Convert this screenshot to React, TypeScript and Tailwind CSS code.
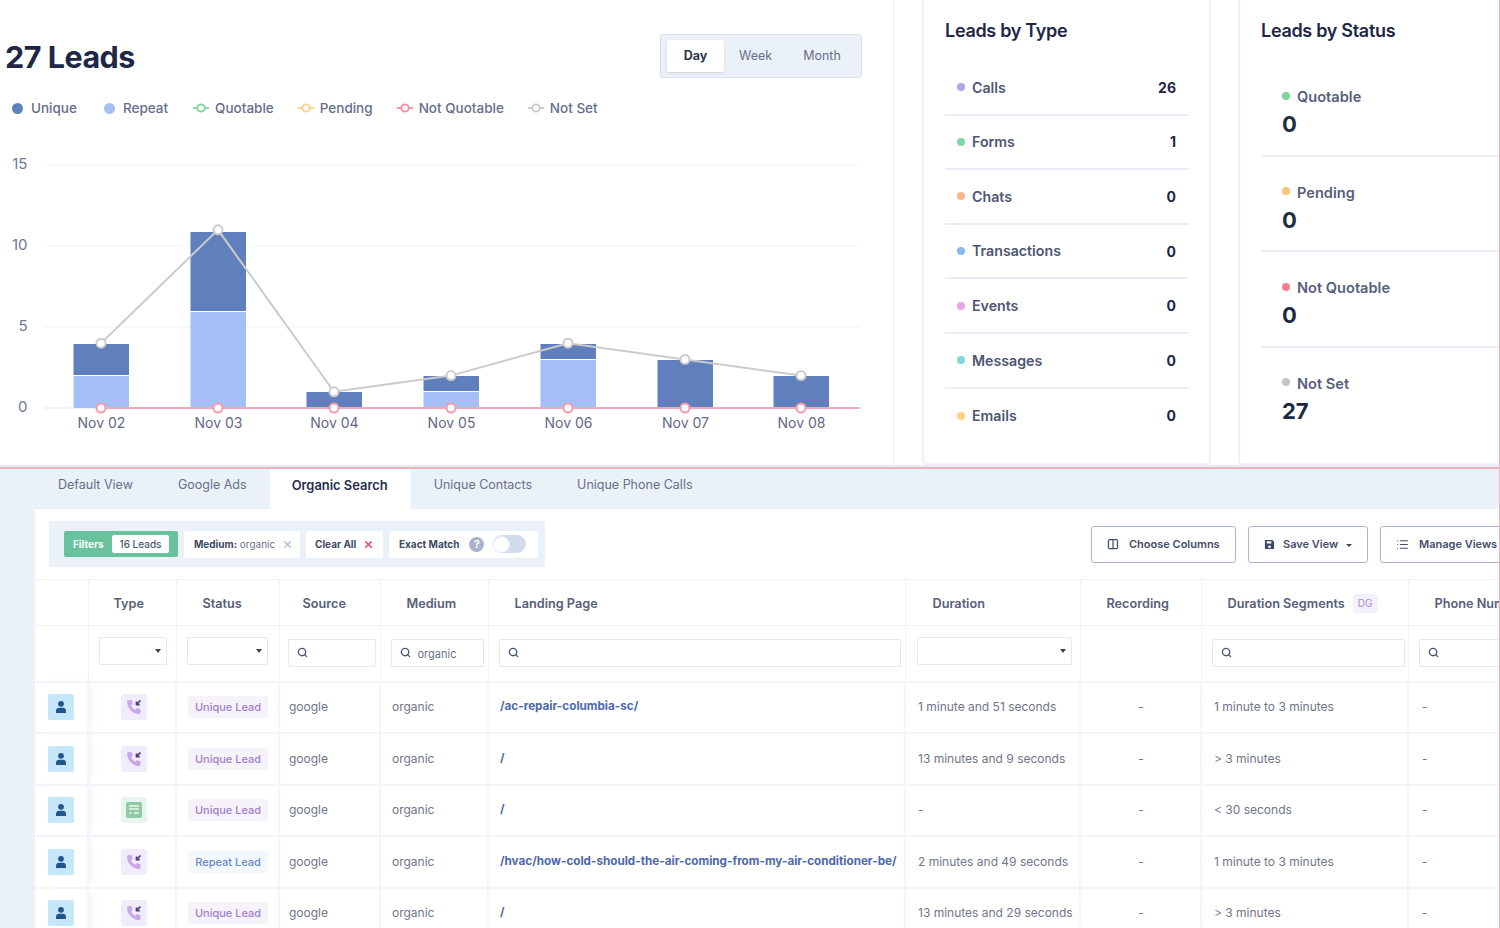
import { Columns2, List, Search, X } from 'lucide-react'

const font = 'font-["Inter","Liberation_Sans",sans-serif]'

const bars = [
  { label: 'Nov 02', x: 101, light: 2, dark: 2, total: 4 },
  { label: 'Nov 03', x: 218, light: 6, dark: 5, total: 11 },
  { label: 'Nov 04', x: 334, light: 0, dark: 1, total: 1 },
  { label: 'Nov 05', x: 451, light: 1, dark: 1, total: 2 },
  { label: 'Nov 06', x: 568, light: 3, dark: 1, total: 4 },
  { label: 'Nov 07', x: 685, light: 0, dark: 3, total: 3 },
  { label: 'Nov 08', x: 801, light: 0, dark: 2, total: 2 },
]

const legend = [
  { name: 'Unique', dot: 'bg-[#5f80bd]', gap: 'mr-[3px]' },
  { name: 'Repeat', dot: 'bg-[#a3bff5]', gap: 'mr-[1px]' },
  { name: 'Quotable', line: '#7dd49a' },
  { name: 'Pending', line: '#fbcf87' },
  { name: 'Not Quotable', line: '#f98d9b' },
  { name: 'Not Set', line: '#c9c9c9' },
]

const leadTypes = [
  { name: 'Calls', value: '26', dot: 'bg-[#b3a3ea]' },
  { name: 'Forms', value: '1', dot: 'bg-[#7fd8a8]' },
  { name: 'Chats', value: '0', dot: 'bg-[#fdb487]' },
  { name: 'Transactions', value: '0', dot: 'bg-[#86b8f5]' },
  { name: 'Events', value: '0', dot: 'bg-[#e9a3e8]' },
  { name: 'Messages', value: '0', dot: 'bg-[#7dd8d8]' },
  { name: 'Emails', value: '0', dot: 'bg-[#fcd27a]' },
]

const leadStatuses = [
  { name: 'Quotable', value: '0', dot: 'bg-[#7fd49a]' },
  { name: 'Pending', value: '0', dot: 'bg-[#fdc477]' },
  { name: 'Not Quotable', value: '0', dot: 'bg-[#f97f8f]' },
  { name: 'Not Set', value: '27', dot: 'bg-[#c4c4c4]' },
]

const rows = [
  { kind: 'call', status: 'Unique Lead', page: '/ac-repair-columbia-sc/', duration: '1 minute and 51 seconds', segment: '1 minute to 3 minutes' },
  { kind: 'call', status: 'Unique Lead', page: '/', duration: '13 minutes and 9 seconds', segment: '> 3 minutes' },
  { kind: 'form', status: 'Unique Lead', page: '/', duration: '-', segment: '< 30 seconds' },
  { kind: 'call', status: 'Repeat Lead', page: '/hvac/how-cold-should-the-air-coming-from-my-air-conditioner-be/', duration: '2 minutes and 49 seconds', segment: '1 minute to 3 minutes' },
  { kind: 'call', status: 'Unique Lead', page: '/', duration: '13 minutes and 29 seconds', segment: '> 3 minutes' },
]

const gridY = (v: number) => 408 - v * 16.2
const barY = (v: number) => 408 - v * 16

function Chart() {
  const points = bars.map((b) => `${b.x},${gridY(b.total)}`).join(' ')
  return (
    <svg width="893" height="300" viewBox="0 140 893 300" className="mt-[22px] block">
      {[0, 5, 10, 15].map((v) => (
        <g key={v}>
          <line x1="44" x2="860" y1={gridY(v)} y2={gridY(v)} stroke={v === 0 ? '#dbe5f1' : '#eff3f8'} strokeWidth="1.2" />
          <text x="27.5" y={gridY(v) + 4} textAnchor="end" fontSize="15" fill="#6f7a94" fontFamily="Inter">{v}</text>
        </g>
      ))}
      {bars.map((b) => (
        <g key={b.label}>
          <rect x={b.x - 27.5} y={barY(b.light + b.dark)} width="55.5" height={b.dark * 16 - 1} fill="#5f80bd" />
          {b.light > 0 && <rect x={b.x - 27.5} y={barY(b.light)} width="55.5" height={b.light * 16} fill="#a3bff5" />}
          <text x={b.x + 0.5} y="428" textAnchor="middle" fontSize="14" fill="#5f6984" fontFamily="Inter">{b.label}</text>
        </g>
      ))}
      <line x1="101" x2="860" y1="408" y2="408" stroke="#f3a9b3" strokeWidth="2" />
      <polyline points={points} fill="none" stroke="#cbcbcb" strokeWidth="2" />
      {bars.map((b) => (
        <g key={b.label}>
          <circle cx={b.x} cy={gridY(b.total)} r="4.5" fill="#fff" stroke="#cbcbcb" strokeWidth="2" />
          <circle cx={b.x} cy="408" r="4.5" fill="#fff" stroke="#f79aa7" strokeWidth="2" />
        </g>
      ))}
    </svg>
  )
}

function LineMarker({ color }: { color: string }) {
  return (
    <svg width="16" height="10" viewBox="0 0 16 10" className="shrink-0">
      <line x1="0" x2="16" y1="5" y2="5" stroke={color} strokeWidth="1.8" />
      <circle cx="8" cy="5" r="3.7" fill="#fff" stroke={color} strokeWidth="1.8" />
    </svg>
  )
}

function PersonIcon() {
  return (
    <span className="flex h-[26px] w-[26px] items-center justify-center rounded-[2px] bg-[#c6e6fa]">
      <svg width="14" height="14" viewBox="0 0 14 14" fill="#21558c">
        <circle cx="7" cy="3.800" r="2.900" />
        <path d="M2 13v-2.200C2 9 3.500 7.800 5 7.800h4c1.500 0 3 1.200 3 3V13z" />
      </svg>
    </span>
  )
}

function CallIcon() {
  return (
    <span className="flex h-[26px] w-[26px] items-center justify-center rounded-[3px] bg-[#f1ecfc]">
      <svg width="18" height="18" viewBox="0 0 18 18">
        <path d="M3.5 2.2 6 2c.5 0 .8.3.9.7l.6 2.6c.1.4 0 .7-.3 1L6 7.300c.8 1.900 2.300 3.500 4.300 4.500l1.100-1.200c.3-.3.7-.4 1-.3l2.500.7c.4.100.7.500.7.900L15.400 14.600c0 1-.8 1.600-1.700 1.500C7.500 15.600 2.500 10.500 2 4c-.1-1 .5-1.700 1.500-1.800z" fill="#c9a7ea" />
        <path d="M15.500 2.500 11.800 6.200M11.500 3.500v3.200h3.200" fill="none" stroke="#4d3f80" strokeWidth="1.700" />
      </svg>
    </span>
  )
}

function FormIcon() {
  return (
    <span className="flex h-[26px] w-[26px] items-center justify-center rounded-[3px] bg-[#e7f7ee]">
      <svg width="18" height="18" viewBox="0 0 18 18">
        <rect x="1" y="1" width="16" height="16" rx="2" fill="#8fcaa2" />
        <path d="M4 5h10M4 8h10" stroke="#e7f7ee" strokeWidth="1.400" />
        <path d="M4 12h2.500M9 12h5" stroke="#e7f7ee" strokeWidth="1.600" />
      </svg>
    </span>
  )
}

function SearchInput({ className, value }: { className: string; value?: string }) {
  return (
    <div className={`-mt-[1px] flex h-[28px] items-center gap-[7px] rounded-[2px] border border-[#e3e9f3] bg-white pl-[8px] ${className}`}>
      <Search size={11} strokeWidth={3} className="shrink-0 text-[#4b5675]" />
      {value && <span className="pt-[2px] text-[11px] text-[#6b7389]">{value}</span>}
    </div>
  )
}

function SelectBox({ className }: { className: string }) {
  return (
    <div className={`-mt-[4px] flex h-[28px] items-center justify-end rounded-[2px] border border-[#e3e9f3] bg-white pr-[5px] ${className}`}>
      <span className="h-0 w-0 border-x-[3.5px] border-t-[4px] border-x-transparent border-t-[#3a4258]" />
    </div>
  )
}

const headerCell = 'border-r border-[#eff2f8] pt-[2px] text-left text-[12.700px] font-semibold text-[#56607a]'
const filterCell = 'border-r border-[#eff2f8] p-0'
const bodyCell = 'border-r-2 border-b-2 border-[#f3f5fa] p-0 whitespace-nowrap'
const plainText = 'text-[12px] text-[#6f7689]'

function LeadsTable() {
  return (
    <table className="w-[1545px] table-fixed border-collapse">
      <colgroup>
        <col className="w-[53px]" />
        <col className="w-[88px]" />
        <col className="w-[103px]" />
        <col className="w-[101px]" />
        <col className="w-[108px]" />
        <col className="w-[417px]" />
        <col className="w-[175px]" />
        <col className="w-[121px]" />
        <col className="w-[207px]" />
        <col className="w-[172px]" />
      </colgroup>
      <thead>
        <tr className="h-[46px] border-y border-[#eff2f8]">
          <th className="border-r border-[#eff2f8]" />
          <th className={`${headerCell} pl-[25px]`}>Type</th>
          <th className={`${headerCell} pl-[26px]`}>Status</th>
          <th className={`${headerCell} pl-[23px]`}>Source</th>
          <th className={`${headerCell} pl-[26px]`}>Medium</th>
          <th className={`${headerCell} pl-[26px]`}>Landing Page</th>
          <th className={`${headerCell} pl-[27px]`}>Duration</th>
          <th className={`${headerCell} pl-[26px]`}>Recording</th>
          <th className={`${headerCell} pl-[26px]`}>
            <span className="flex items-center gap-[8px]">
              Duration Segments
              <span className="rounded-[3px] bg-[#f4f0fc] px-[5px] py-[2px] text-[10px] font-normal text-[#a48bd8]">DG</span>
            </span>
          </th>
          <th className={`${headerCell} pl-[26px] whitespace-nowrap`}>Phone Number</th>
        </tr>
        <tr className="h-[56px] border-b-2 border-[#f3f5fa]">
          <th className={filterCell} />
          <th className={filterCell}><SelectBox className="ml-[10px] w-[68px]" /></th>
          <th className={filterCell}><SelectBox className="ml-[10px] w-[81px]" /></th>
          <th className={filterCell}><SearchInput className="ml-[8px] w-[88px]" /></th>
          <th className={`${filterCell} font-normal`}><SearchInput className="ml-[10px] w-[93px]" value="organic" /></th>
          <th className={filterCell}><SearchInput className="ml-[10px] w-[402px]" /></th>
          <th className={filterCell}><SelectBox className="ml-[11px] w-[155px]" /></th>
          <th className={filterCell} />
          <th className={filterCell}><SearchInput className="ml-[10px] w-[193px]" /></th>
          <th className={filterCell}><SearchInput className="ml-[10px] w-[120px]" /></th>
        </tr>
      </thead>
      <tbody>
        {rows.map((row, i) => (
          <tr key={i} className="h-[51.500px]">
            <td className="border-r-2 border-b-2 border-[#f3f5fa] pl-[13px] shadow-[5px_0_8px_-3px_rgba(120,135,170,0.12)]">
              <PersonIcon />
            </td>
            <td className="border-r-2 border-b-2 border-[#f3f5fa] pl-[32px]">
              {row.kind === 'call' ? <CallIcon /> : <FormIcon />}
            </td>
            <td className="border-r-2 border-b-2 border-[#f3f5fa] pl-[11px]">
              {row.status === 'Unique Lead' ? (
                <span className="flex h-[22px] w-[80px] items-center justify-center rounded-[2px] bg-[#f6f3fb] text-[11px] font-medium whitespace-nowrap text-[#a17fcc]">{row.status}</span>
              ) : (
                <span className="flex h-[22px] w-[80px] items-center justify-center rounded-[2px] bg-[#f3f8fe] text-[11px] font-medium whitespace-nowrap text-[#6a88c4]">{row.status}</span>
              )}
            </td>
            <td className={`${bodyCell} ${plainText} pl-[9px]`}>google</td>
            <td className={`${bodyCell} ${plainText} pl-[11px]`}>organic</td>
            <td className={`${bodyCell} pl-[11px] text-[11.700px] font-bold text-[#4d68ad]`}>{row.page}</td>
            <td className={`${bodyCell} ${plainText} pl-[12px]`}>{row.duration}</td>
            <td className={`${bodyCell} ${plainText} pl-[1px] text-center`}>-</td>
            <td className={`${bodyCell} ${plainText} pl-[12px]`}>{row.segment}</td>
            <td className={`${bodyCell} ${plainText} pl-[13px]`}>-</td>
          </tr>
        ))}
      </tbody>
    </table>
  )
}

export default function App() {
  return (
    <div className={`${font} h-[928px] w-[1500px] overflow-hidden border-r border-[#e6b7bf] bg-[#eaf1f8]`}>
      <section className="flex h-[467px] border-b-2 border-[#e9eef6] bg-white">
        <div className="h-full w-[894px] shrink-0 border-r border-[#e9eef6]">
          <div className="flex items-start justify-between pt-[34px] pl-[5px] pr-[31px]">
            <h1 className="pt-[1px] text-[30.500px] leading-[44px] font-bold tracking-[-0.5px] text-[#1e2747]">27 Leads</h1>
            <div className="flex h-[44px] w-[202px] items-center rounded-[3px] border border-[#d8e2f0] bg-[#eaf1f8] pl-[6px] text-[12.500px] text-[#68708a]">
              <span className="flex h-[32px] w-[57px] items-center justify-center rounded-[2px] bg-white font-bold text-[#2c3350] shadow-sm">Day</span>
              <span className="ml-[15px]">Week</span>
              <span className="ml-[31px]">Month</span>
            </div>
          </div>
          <div className="mt-[19px] flex h-[20px] items-center gap-[24px] pl-[12px] text-[13.500px] font-medium text-[#656e8c]">
            {legend.map((item) => (
              <span key={item.name} className={`flex items-center gap-[6px] ${item.gap ?? ''}`}>
                {item.line ? <LineMarker color={item.line} /> : <span className={`mr-[2px] h-[11px] w-[11px] rounded-full ${item.dot}`} />}
                {item.name}
              </span>
            ))}
          </div>
          <Chart />
        </div>

        <div className="ml-[28px] flex h-[465px] w-[289px] shrink-0 flex-col rounded-b border-x-2 border-b-2 border-[#eef2f8] px-[21px]">
          <h2 className="mt-[18px] text-[18px] leading-[26px] font-semibold tracking-[-0.3px] text-[#1e2747]">Leads by Type</h2>
          <ul className="mt-[17px]">
            {leadTypes.map((t) => (
              <li key={t.name} className="flex h-[54.600px] items-center justify-between border-b-2 border-[#e9eef6] px-[12px] last:border-b-0">
                <span className="flex items-center gap-[7px] text-[14.200px] font-semibold text-[#4c5675]">
                  <span className={`h-[8px] w-[8px] rounded-full ${t.dot}`} />
                  {t.name}
                </span>
                <span className="text-[14px] font-bold text-[#1e2747]">{t.value}</span>
              </li>
            ))}
          </ul>
        </div>

        <div className="ml-[27px] flex h-[465px] w-[291px] shrink-0 flex-col rounded-b border-x-2 border-b-2 border-[#eef2f8] pl-[21px]">
          <h2 className="mt-[18px] text-[18px] leading-[26px] font-semibold tracking-[-0.3px] text-[#1e2747]">Leads by Status</h2>
          <ul className="mt-[17px]">
            {leadStatuses.map((s) => (
              <li key={s.name} className="flex h-[95.500px] flex-col border-b-2 border-[#e9eef6] pt-[26px] pl-[21px] last:border-b-0">
                <span className="flex items-center gap-[7px] text-[14.600px] leading-[20px] font-semibold text-[#565f7c]">
                  <span className={`mb-[3px] h-[8px] w-[8px] rounded-full ${s.dot}`} />
                  {s.name}
                </span>
                <span className="mt-[2px] text-[22px] leading-[30px] font-bold text-[#1e2747]">{s.value}</span>
              </li>
            ))}
          </ul>
        </div>
      </section>

      <div className="h-[2px] bg-[#e8b3bd]" />

      <nav className="ml-[35px] flex h-[40px] text-[12.500px] text-[#676f8a]">
        <span className="pl-[23px] pr-[22px] pt-[7px]">Default View</span>
        <span className="pl-[23px] pr-[23px] pt-[7px]">Google Ads</span>
        <span className="bg-white pl-[22px] pr-[23px] pt-[7px] text-[12.900px] font-semibold text-[#262e4b]">Organic Search</span>
        <span className="px-[23px] pt-[7px]">Unique Contacts</span>
        <span className="px-[22px] pt-[7px]">Unique Phone Calls</span>
      </nav>

      <main className="ml-[35px] bg-white">
        <div className="flex h-[70px] items-center justify-between pl-[14px]">
          <div className="flex h-[46px] w-[496px] items-center gap-[6px] rounded-[2px] bg-[#eaf1f8] pl-[15px]">
            <div className="flex h-[26px] w-[114px] items-center justify-between rounded-[2px] bg-[#68c29c] pl-[9px] pr-[9px] text-[10px] font-bold text-white">
              Filters
              <span className="flex h-[18px] w-[57px] items-center justify-center rounded-[2px] bg-white font-medium text-[#4c5675]">16 Leads</span>
            </div>
            <div className="flex h-[27px] w-[116px] items-center justify-between rounded-[2px] bg-white pl-[10px] pr-[7px] text-[10px] whitespace-nowrap text-[#6b7389]">
              <span><b className="font-bold text-[#3e4765]">Medium:</b> organic</span>
              <X size={11} strokeWidth={3} className="text-[#b4bbcb]" />
            </div>
            <div className="flex h-[27px] w-[77px] items-center justify-between rounded-[2px] bg-white px-[9px] text-[10px] font-bold whitespace-nowrap text-[#3e4765]">
              Clear All
              <X size={11} strokeWidth={3.500} className="text-[#f0457c]" />
            </div>
            <div className="flex h-[27px] w-[149px] items-center rounded-[2px] bg-white pl-[10px] text-[10px] font-bold whitespace-nowrap text-[#3e4765]">
              Exact Match
              <span className="ml-[10px] flex h-[15px] w-[15px] items-center justify-center rounded-full bg-[#a9b3cd] text-[11px] font-bold text-white">?</span>
              <span className="ml-[9px] flex h-[18px] w-[33px] items-center rounded-full bg-[#d3dcee]">
                <span className="h-[17px] w-[17px] rounded-full border border-[#e5eaf3] bg-white" />
              </span>
            </div>
          </div>
          <div className="-mr-[21px] flex gap-[12px] text-[11px] font-semibold text-[#444d6b]">
            <button className="flex h-[37px] w-[145px] items-center rounded-[3px] border-[1.500px] border-[#aab6d0] pl-[15px]">
              <Columns2 size={12} strokeWidth={2.500} />
              <span className="ml-[10px]">Choose Columns</span>
            </button>
            <button className="flex h-[37px] w-[120px] items-center rounded-[3px] border-[1.500px] border-[#aab6d0] pl-[15px]">
              <svg width="11" height="11" viewBox="0 0 12 12" fill="#3e4765">
                <path d="M1 1h8l2 2v8H1zM3 2.500v2.500h5V2.500zM6 7a1.500 1.500 0 1 0 0 3 1.500 1.500 0 0 0 0-3z" fillRule="evenodd" />
              </svg>
              <span className="ml-[8px]">Save View</span>
              <span className="ml-[8px] mt-[3px] h-0 w-0 border-x-[3.500px] border-t-[3.500px] border-x-transparent border-t-[#3a4258]" />
            </button>
            <button className="flex h-[37px] w-[140px] items-center rounded-[3px] border-[1.500px] border-[#aab6d0] pl-[15px]">
              <List size={13} strokeWidth={2} />
              <span className="ml-[10px]">Manage Views</span>
            </button>
          </div>
        </div>
        <LeadsTable />
      </main>
    </div>
  )
}
